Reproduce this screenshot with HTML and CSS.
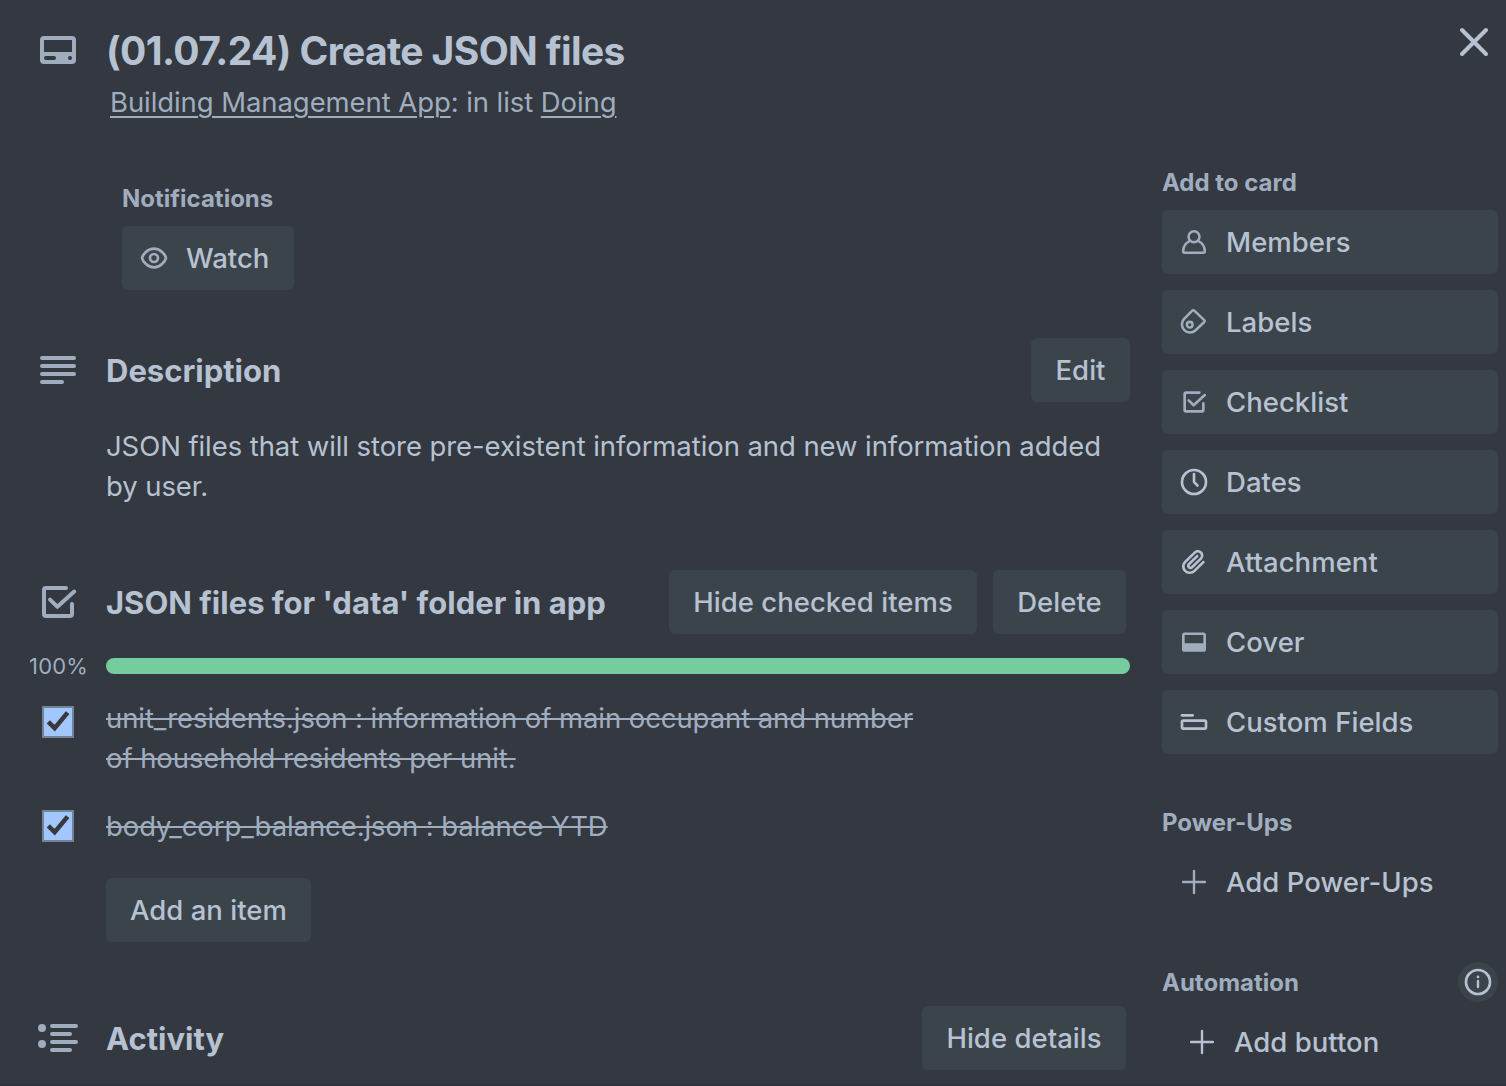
FILE: index.html
```html
<!DOCTYPE html>
<html lang="en">
<head>
<meta charset="utf-8">
<title>(01.07.24) Create JSON files</title>
<link rel="stylesheet" href="styles.css">
</head>
<body>
<svg class="sprite" aria-hidden="true">
  <symbol id="check-square" viewBox="0 0 24 24">
    <path class="line" d="M16 5H6a1 1 0 0 0-1 1v12a1 1 0 0 0 1 1h12a1 1 0 0 0 1-1v-5M8 10.8l3.7 3.6L20.1 6.8"/>
  </symbol>
  <symbol id="plus" viewBox="0 0 24 24">
    <path class="line thin" d="M12 3.8v16.4M3.8 12h16.4"/>
  </symbol>
  <symbol id="tick" viewBox="0 0 32 32">
    <path class="tick" d="M6.3 15.8l6.4 6.4L25.6 6.6"/>
  </symbol>
</svg>
<div class="card">
  <main class="main">
    <header class="header">
      <svg class="icon-lg" viewBox="0 0 24 24"><path fill-rule="evenodd" d="M5 5h14a2 2 0 0 1 2 2v10a2 2 0 0 1-2 2H5a2 2 0 0 1-2-2V7a2 2 0 0 1 2-2zm0 2v6h14V7zm1 8a1 1 0 0 0 0 2h4a1 1 0 0 0 0-2zm12 0a1 1 0 1 0 0 2 1 1 0 0 0 0-2z"/></svg>
      <h1 class="title">(01.07.24) Create JSON files</h1>
    </header>
    <p class="location"><a class="link">Building Management App</a>: in list <a class="link">Doing</a></p>

    <section class="notifications">
      <h3 class="label">Notifications</h3>
      <button class="button watch">
        <svg class="icon" viewBox="0 0 24 24"><path class="line" d="M12 5C6.8 5 3.5 9.8 3 12c.5 2.200 3.800 7 9 7s8.500-4.800 9-7c-.5-2.200-3.800-7-9-7z"/><circle class="line" cx="12" cy="12" r="3"/></svg>
        <span>Watch</span>
      </button>
    </section>

    <section class="section-head description-head">
      <svg class="icon-lg" viewBox="0 0 24 24"><path class="line" d="M4 6h16M4 10h16M4 14h16M4 18h10"/></svg>
      <h2 class="heading">Description</h2>
      <button class="button edit">Edit</button>
    </section>
    <p class="description">JSON files that will store pre-existent information and new information added<br>by user.</p>

    <section class="section-head checklist-head">
      <svg class="icon-lg"><use href="#check-square"/></svg>
      <h2 class="heading">JSON files for 'data' folder in app</h2>
      <button class="button hide-checked">Hide checked items</button>
      <button class="button delete">Delete</button>
    </section>
    <div class="progress">
      <span class="percent">100%</span>
      <div class="track"><div class="fill" style="width:100%"></div></div>
    </div>
    <ul class="items">
      <li class="item"><span class="checkbox"><svg class="mark"><use href="#tick"/></svg></span><span class="item-text">unit_residents.json : information of main occupant and number<br>of household residents per unit.</span></li>
      <li class="item"><span class="checkbox"><svg class="mark"><use href="#tick"/></svg></span><span class="item-text">body_corp_balance.json : balance YTD</span></li>
    </ul>
    <button class="button add-item">Add an item</button>

    <section class="section-head activity-head">
      <svg class="icon-lg" viewBox="0 0 24 24"><circle cx="4" cy="7" r="2"/><circle cx="4" cy="15" r="2"/><path class="line" d="M9 6h12M9 10h9M9 14h12M9 18h9"/></svg>
      <h2 class="heading">Activity</h2>
      <button class="button hide-details">Hide details</button>
    </section>
  </main>

  <aside class="side">
    <div class="close-row">
      <svg class="close" viewBox="0 0 24 24"><path class="line" d="M6 6l12 12M18 6L6 18"/></svg>
    </div>
    <h3 class="label">Add to card</h3>
    <nav class="actions">
      <button class="button action"><svg class="icon" viewBox="0 0 24 24"><circle class="line outline" cx="12" cy="8" r="4.100"/><path class="line outline" d="M8.600 11.400C5.800 12.700 4 15.500 3.900 19a1 1 0 0 0 1 1h14.200a1 1 0 0 0 1-1c-.1-3.500-1.900-6.300-4.700-7.600"/></svg><span>Members</span></button>
      <button class="button action"><svg class="icon" viewBox="0 0 24 24"><path class="line outline" d="M10.700 3.500L4.400 9.800a6.100 6.100 0 0 0 8.600 8.600L19.700 12a1 1 0 0 0 0-1.400L12.200 3.500a1 1 0 0 0-1.500 0z"/><circle class="line outline" cx="8.800" cy="14" r="2.100"/></svg><span>Labels</span></button>
      <button class="button action"><svg class="icon"><use href="#check-square"/></svg><span>Checklist</span></button>
      <button class="button action"><svg class="icon bright" viewBox="0 0 24 24"><circle class="line" cx="12" cy="12" r="9"/><path class="line" d="M12 6v5.600q0 .4.300.7L14.600 14.600"/></svg><span>Dates</span></button>
      <button class="button action"><svg class="icon bright" viewBox="0 0 24 24"><path d="M11.643 17.965c-1.531 1.495-4.016 1.496-5.542.004-1.526-1.491-1.523-3.922.002-5.412l7.147-6.985c.898-.877 2.336-.88 3.233-.003.893.873.895 2.282.004 3.153l-6.703 6.550c-.251.245-.656.244-.914-.008-.259-.253-.260-.648 0-.902l6.229-6.087c.382-.374.382-.980 0-1.353-.382-.374-1.002-.374-1.384 0l-6.230 6.087c-1.026 1.003-1.021 2.609 0 3.607 1.022.998 2.666 1.002 3.683.009l6.703-6.550c1.656-1.619 1.653-4.240-.003-5.859-1.663-1.625-4.341-1.620-6.002.003L4.718 11.204c-2.289 2.236-2.293 5.879-.001 8.118 2.291 2.239 6.015 2.238 8.310-.005l6.686-6.533c.383-.374.383-.979 0-1.353-.382-.374-1.002-.374-1.384 0z"/></svg><span>Attachment</span></button>
      <button class="button action"><svg class="icon" viewBox="0 0 24 24"><path fill-rule="evenodd" d="M5 4.800h14a2 2 0 0 1 2 2v10.600a2 2 0 0 1-2 2H5a2 2 0 0 1-2-2V6.800a2 2 0 0 1 2-2zm0 2v6.100h14V6.800z"/></svg><span>Cover</span></button>
      <button class="button action"><svg class="icon bright" viewBox="0 0 24 24"><path class="line" d="M3 7h8"/><rect class="line" x="3" y="11" width="18" height="6" rx="1"/></svg><span>Custom Fields</span></button>
    </nav>
    <h3 class="label power-label">Power-Ups</h3>
    <button class="button action plain"><svg class="icon"><use href="#plus"/></svg><span>Add Power-Ups</span></button>
    <div class="automation">
      <h3 class="label">Automation</h3>
      <span class="info"><svg class="icon bright" viewBox="0 0 24 24"><circle class="line" cx="12" cy="12" r="9"/><path class="line stem" d="M12 11.300v4.400"/><circle cx="12" cy="8.200" r="1"/></svg></span>
    </div>
    <button class="button action plain indent"><svg class="icon bright"><use href="#plus"/></svg><span>Add button</span></button>
  </aside>
</div>
</body>
</html>
```
FILE: styles.css
```css
* { box-sizing: border-box; }

body {
  margin: 0;
  background: #343840;
  color: #b6c2d1;
  font-family: Inter, "Liberation Sans", sans-serif;
  font-size: 27.5px;
  line-height: 40px;
  letter-spacing: -0.08px;
}

h1, h2, h3, p, ul { margin: 0; padding: 0; }

.sprite { display: none; }

.card {
  display: flex;
  width: 1506px;
  height: 1086px;
  overflow: hidden;
  white-space: nowrap;
  border-bottom: 2px solid #303238;
}

.main { width: 1130px; padding-top: 26px; }

.side {
  width: 336px;
  margin-left: 32px;
  padding-top: 18px;
}

svg { display: block; flex: none; fill: currentColor; }
.line {
  fill: none;
  stroke: currentColor;
  stroke-width: 2;
  stroke-linecap: round;
  stroke-linejoin: round;
}
.thin { stroke-width: 1.8; }
.outline { stroke-width: 1.9; }

.icon { width: 32px; height: 32px; color: #9fadbf; }
.bright { color: #b6c2d1; }
.icon-lg {
  width: 48px;
  height: 48px;
  margin: 0 24px 0 34px;
  color: #9fadbf;
}

.header { display: flex; align-items: center; height: 48px; }
.title {
  padding-top: 2px;
  font-size: 39px;
  font-weight: 700;
  line-height: 48px;
  letter-spacing: -0.62px;
}

.location {
  margin: 8px 0 0 110px;
  color: #9fadbf;
}
.link { text-decoration: underline; text-decoration-thickness: 2px; text-underline-offset: 4px; }

.label {
  padding-top: 2px;
  font-size: 24px;
  font-weight: 700;
  line-height: 30px;
  letter-spacing: 0;
  color: #9fadbf;
}

.button {
  display: flex;
  align-items: center;
  justify-content: center;
  flex: none;
  height: 64px;
  padding: 0;
  border: 0;
  border-radius: 6px;
  background: #3c444b;
  color: #b6c2d1;
  font: 500 27.5px/40px Inter, "Liberation Sans", sans-serif;
  letter-spacing: 0.03px;
}

.notifications { margin: 60px 0 0 122px; }
.watch { width: 172px; margin-top: 12px; justify-content: flex-start; padding-left: 16px; gap: 16px; }

.section-head { display: flex; align-items: center; height: 64px; }
.heading {
  flex: 1;
  padding-top: 2px;
  font-size: 31px;
  font-weight: 700;
  line-height: 40px;
  letter-spacing: 0;
}
.description-head { margin-top: 48px; }
.edit { width: 99px; }
.description { margin: 24px 0 0 106px; }

.checklist-head { margin-top: 64px; padding-right: 4px; }
.hide-checked { width: 308px; margin-right: 16px; }
.delete { width: 133px; }

.progress { display: flex; align-items: center; height: 16px; margin-top: 24px; }
.percent {
  width: 106px;
  padding-left: 29px;
  color: #9fadbf;
  font-size: 22px;
  letter-spacing: 0.2px;
}
.track { flex: 1; height: 16px; border-radius: 8px; background: #3c444b; }
.fill { height: 100%; border-radius: 8px; background: #75cc9c; }

.items { display: flex; flex-direction: column; gap: 28px; margin-top: 24px; list-style: none; }
.item { display: flex; align-items: flex-start; padding-left: 42px; color: #9fadbf; }
.checkbox {
  width: 32px;
  height: 32px;
  margin: 8px 32px 0 0;
  border: 2px solid #738496;
  background: #a2c7ff;
}
.item + .item .checkbox { margin-top: 4px; }
.mark { width: 32px; height: 32px; margin: -2px; }
.tick { fill: none; stroke: #38393b; stroke-width: 4.600px; }
.item-text { text-decoration: line-through; text-decoration-thickness: 2px; }
.add-item { width: 205px; margin: 32px 0 0 106px; }

.activity-head { margin-top: 64px; padding-right: 4px; }
.hide-details { width: 204px; }

.close-row { display: flex; justify-content: flex-end; }
.close { width: 48px; height: 48px; }
.side > .label { margin-top: 100px; }
.actions { display: flex; flex-direction: column; gap: 16px; margin-top: 12px; }
.action { width: 100%; justify-content: flex-start; padding-left: 16px; gap: 16px; }
.side > .power-label { margin: 52px 0 12px; }
.plain { margin-top: 0; background: transparent; }
.indent { padding-left: 24px; }
.automation {
  display: flex;
  align-items: center;
  justify-content: space-between;
  margin: 48px 0 8px;
}
.info {
  display: grid;
  place-items: center;
  width: 40px;
  height: 40px;
  border-radius: 50%;
  background: #3c444b;
}
.stem { stroke-width: 1.800; }
```
